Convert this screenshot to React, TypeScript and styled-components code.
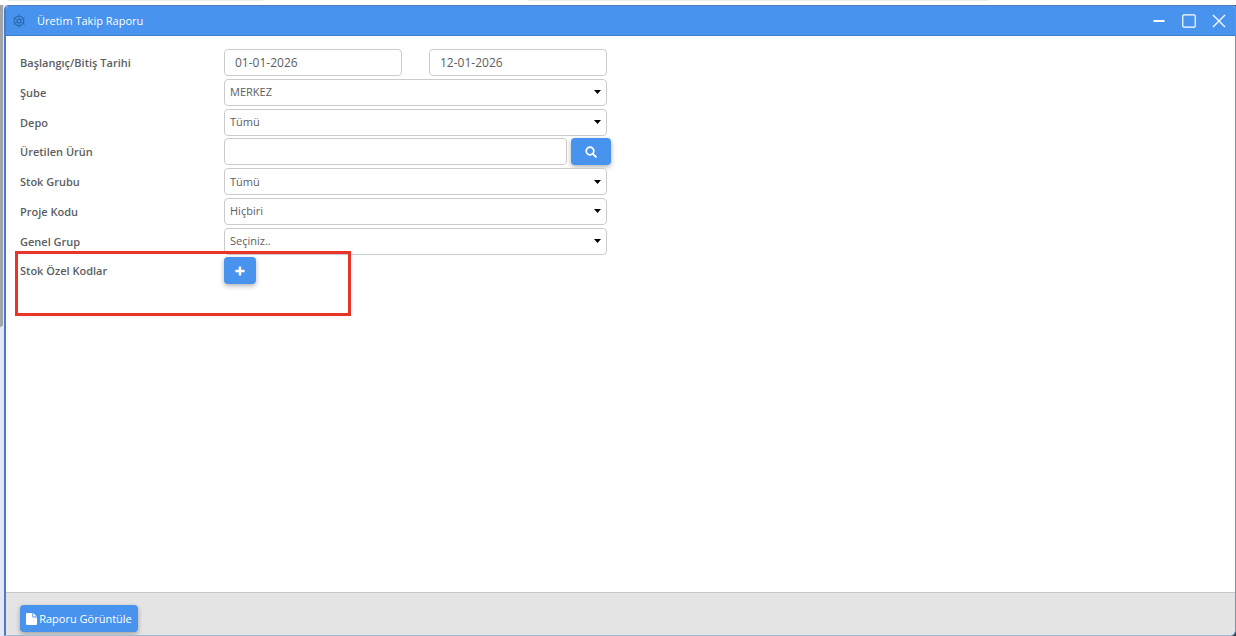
import React from 'react';
import styled, { createGlobalStyle } from 'styled-components';

const BLUE = '#4893ed';
const FONT = '"Open Sans", "Noto Sans", sans-serif';

const GlobalStyle = createGlobalStyle`
  *, *::before, *::after { box-sizing: border-box; }
  html, body, #root { height: 100%; }
  body {
    margin: 0;
    overflow: hidden;
    background: #fff;
    color: #5b5e61;
    font-family: ${FONT};
    font-size: 11px;
    line-height: 16px;
  }
  button, input, select { font: inherit; color: inherit; }
`;

const Page = styled.div`
  display: flex;
  flex-direction: column;
  height: 100vh;
`;

const TopStrip = styled.div`
  display: flex;
  justify-content: space-between;
  flex: none;
  height: 5px;
  padding: 0 20% 0 8px;
`;

const StripEdge = styled.div<{ $share: string }>`
  width: ${(p) => p.$share};
  height: 1px;
  background: #ececee;
`;

const Desktop = styled.div`
  display: flex;
  flex: 1;
  min-height: 0;
  background: linear-gradient(to right, #e5e8f4 50%, #3a4340 50%);
`;

const Track = styled.div`
  flex: none;
  width: 4px;
  padding-right: 1px;
`;

const Thumb = styled.div`
  height: 51%;
  background: #a3a4a9;
  border-radius: 0 0 3px 0;
`;

const Window = styled.section`
  display: flex;
  flex: 1;
  flex-direction: column;
  min-width: 0;
  border: solid #4a7cc2;
  border-width: 1px 1px 1px 2px;
  border-top-color: #4f7fb6;
  border-right-color: #5b96e2;
  border-bottom-color: #9fb9d4;
  border-radius: 5px 3px 6px 0;
  background: #fff;
  overflow: hidden;
`;

const TitleBar = styled.header`
  display: flex;
  align-items: center;
  flex: none;
  height: 30px;
  padding: 0 8px 0 6px;
  border-bottom: 1px solid #3d7fcb;
  background: ${BLUE};
  color: #fff;
`;

const Title = styled.h1`
  flex: 1;
  margin: 0 0 0 11px;
  font-size: 11px;
  font-weight: 400;
`;

const WindowButtons = styled.div`
  display: flex;
  gap: 14px;
`;

const WindowButton = styled.button`
  display: grid;
  place-items: center;
  width: 16px;
  height: 16px;
  padding: 0;
  border: 0;
  background: none;
  color: #fff;
`;

const Body = styled.main`
  flex: 1;
  min-height: 0;
  padding: 13px 14px;
`;

const Form = styled.form`
  display: grid;
  grid-template-rows: repeat(8, 1fr);
  min-height: 238px;
`;

const Row = styled.div`
  position: relative;
  display: grid;
  grid-template-columns: 204px 1fr;
  align-items: start;
`;

const Label = styled.label`
  padding: 6px 0 5px;
  font-weight: 600;
`;

const Fields = styled.div<{ $gap: number }>`
  display: flex;
  align-items: start;
  gap: ${(p) => p.$gap}px;
`;

const TextBox = styled.input<{ $width: number }>`
  width: ${(p) => p.$width}px;
  height: 27px;
  padding: 0 5px;
  border: 1px solid #c9cbcd;
  border-radius: 4px;
  background: #fff;
  outline: 0;
`;

const DateBox = styled(TextBox)`
  padding: 0 10px;
  font-size: 12px;
`;

const SelectFrame = styled.div`
  display: grid;
  width: 383px;
  align-items: center;

  > * { grid-area: 1 / 1; }
  svg { justify-self: end; margin-right: 6px; pointer-events: none; }
`;

const Select = styled.select`
  height: 27px;
  padding: 0 20px 0 5px;
  border: 1px solid #c9cbcd;
  border-radius: 4px;
  background: #fff;
  appearance: none;
`;

const ActionButton = styled.button<{ $width: number }>`
  display: flex;
  align-items: center;
  justify-content: center;
  gap: 2px;
  width: ${(p) => p.$width}px;
  height: 27px;
  padding: 0;
  border: 0;
  border-radius: 4px;
  background: ${BLUE};
  box-shadow: 0 2px 5px rgba(0, 0, 0, 0.3);
  color: #fff;
  white-space: nowrap;
`;

const Highlight = styled.div`
  position: absolute;
  top: -6px;
  left: -5px;
  width: 336px;
  height: 65px;
  border: 3px solid #e9342a;
  pointer-events: none;
`;

const Footer = styled.footer`
  flex: none;
  padding: 12px 14px 3px;
  border-top: 1px solid #c5c6c8;
  background: #e4e4e4;
`;

const GearIcon = () => (
  <svg width="14" height="14" viewBox="0 0 14 14" fill="none" stroke="#2b6db5" aria-hidden="true">
    <circle cx="7" cy="7" r="4.8" strokeWidth="1.3" />
    <circle cx="7" cy="7" r="1.9" strokeWidth="1.2" />
    <path
      strokeWidth="0.8"
      d="M7 0v5M7 9v5M1 3.5l4.2 2.4M8.8 8.1l4.2 2.4M13 3.5L8.8 5.9M5.2 8.1L1 10.5"
    />
  </svg>
);

const MinimizeIcon = () => (
  <svg width="16" height="16" viewBox="0 0 16 16" aria-hidden="true">
    <path d="M2.5 8h11" stroke="currentColor" strokeWidth="2" />
  </svg>
);

const MaximizeIcon = () => (
  <svg width="16" height="16" viewBox="0 0 16 16" aria-hidden="true">
    <rect x="1.8" y="1.8" width="12.4" height="12.4" rx="1" fill="none" stroke="currentColor" strokeWidth="1.2" />
  </svg>
);

const CloseIcon = () => (
  <svg width="16" height="16" viewBox="0 0 16 16" aria-hidden="true">
    <path d="M2 2l12 12M14 2L2 14" stroke="currentColor" strokeWidth="1.3" />
  </svg>
);

const CaretIcon = () => (
  <svg width="7" height="4" viewBox="0 0 7 4" aria-hidden="true">
    <path d="M0 0h7L3.5 4z" fill="#000" />
  </svg>
);

const SearchIcon = () => (
  <svg width="12" height="12" viewBox="0 0 12 12" fill="none" stroke="currentColor" aria-hidden="true">
    <circle cx="5" cy="5" r="3.8" strokeWidth="1.7" />
    <path d="M7.9 7.9l3 3" strokeWidth="1.9" strokeLinecap="round" />
  </svg>
);

const PlusIcon = () => (
  <svg width="10" height="10" viewBox="0 0 10 10" aria-hidden="true">
    <path d="M5 .4v9.2M.4 5h9.2" stroke="currentColor" strokeWidth="2.4" />
  </svg>
);

const FileIcon = () => (
  <svg width="11" height="12" viewBox="0 0 11 12" fill="currentColor" aria-hidden="true">
    <path d="M1 0h5.3v3.6c0 .5.3.8.8.8H11v6.7c0 .5-.4.9-.9.9H1c-.5 0-1-.4-1-.9V.9C0 .4.5 0 1 0z" />
    <path d="M7.2 0l3.7 3.5H7.2z" />
  </svg>
);

function SelectRow({ id, label, value }: { id: string; label: string; value: string }) {
  return (
    <Row>
      <Label htmlFor={id}>{label}</Label>
      <SelectFrame>
        <Select id={id} defaultValue={value}>
          <option>{value}</option>
        </Select>
        <CaretIcon />
      </SelectFrame>
    </Row>
  );
}

export default function App() {
  return (
    <Page>
      <GlobalStyle />
      <TopStrip>
        <StripEdge $share="26%" />
        <StripEdge $share="47%" />
      </TopStrip>
      <Desktop>
        <Track>
          <Thumb />
        </Track>
        <Window>
          <TitleBar>
            <GearIcon />
            <Title>Üretim Takip Raporu</Title>
            <WindowButtons>
              <WindowButton type="button" aria-label="Küçült"><MinimizeIcon /></WindowButton>
              <WindowButton type="button" aria-label="Büyüt"><MaximizeIcon /></WindowButton>
              <WindowButton type="button" aria-label="Kapat"><CloseIcon /></WindowButton>
            </WindowButtons>
          </TitleBar>
          <Body>
            <Form id="report">
              <Row>
                <Label htmlFor="start">Başlangıç/Bitiş Tarihi</Label>
                <Fields $gap={27}>
                  <DateBox id="start" $width={178} defaultValue="01-01-2026" />
                  <DateBox aria-label="Bitiş Tarihi" $width={178} defaultValue="12-01-2026" />
                </Fields>
              </Row>
              <SelectRow id="branch" label="Şube" value="MERKEZ" />
              <SelectRow id="depot" label="Depo" value="Tümü" />
              <Row>
                <Label htmlFor="product">Üretilen Ürün</Label>
                <Fields $gap={4}>
                  <TextBox id="product" $width={343} />
                  <ActionButton type="button" $width={40} aria-label="Ara"><SearchIcon /></ActionButton>
                </Fields>
              </Row>
              <SelectRow id="stock" label="Stok Grubu" value="Tümü" />
              <SelectRow id="project" label="Proje Kodu" value="Hiçbiri" />
              <SelectRow id="group" label="Genel Grup" value="Seçiniz.." />
              <Row>
                <Label htmlFor="codes">Stok Özel Kodlar</Label>
                <ActionButton id="codes" type="button" $width={32} aria-label="Ekle"><PlusIcon /></ActionButton>
                <Highlight />
              </Row>
            </Form>
          </Body>
          <Footer>
            <ActionButton type="submit" form="report" $width={118}>
              <FileIcon />
              Raporu Görüntüle
            </ActionButton>
          </Footer>
        </Window>
      </Desktop>
    </Page>
  );
}
